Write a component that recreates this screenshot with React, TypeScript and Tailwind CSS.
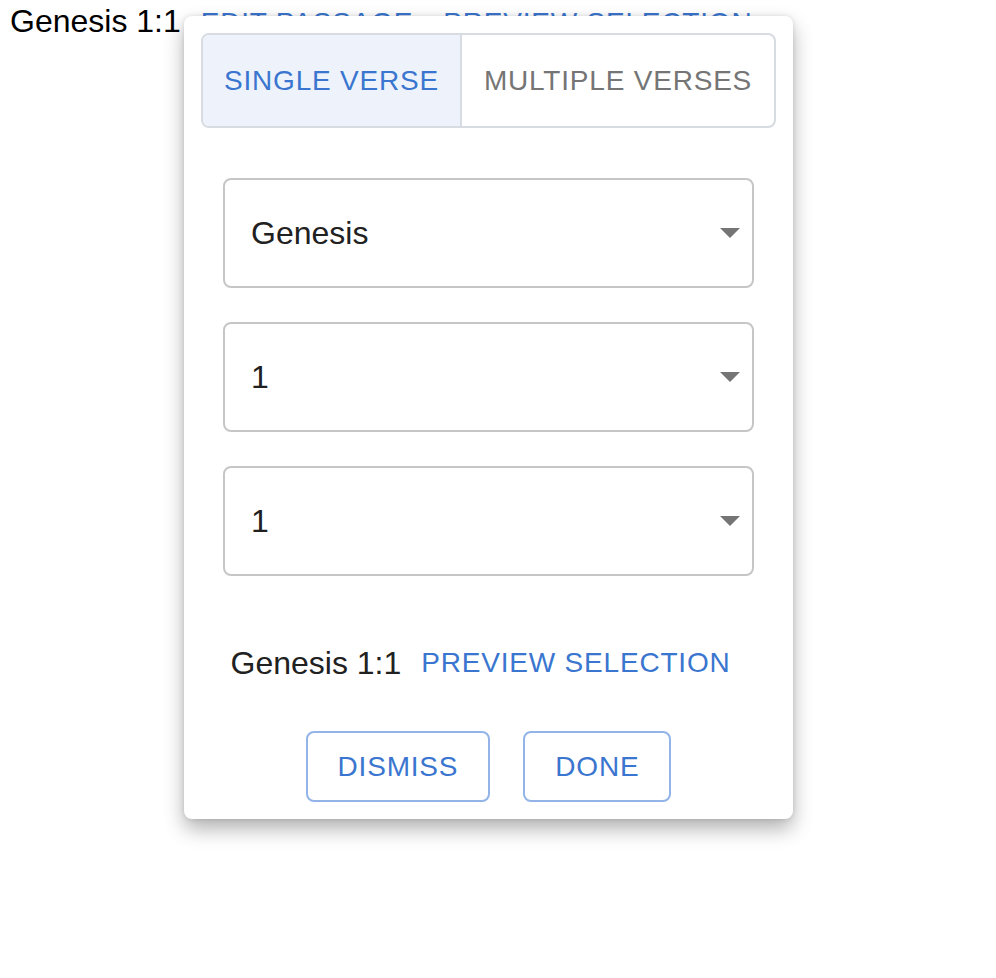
import { useState } from 'react'

const blue = 'text-[#3a76cf]'

function ArrowDown(){
  return (
    <svg width="20" height="10" viewBox="0 0 20 10" className="shrink-0">
      <path d="M0 0 L20 0 L10 10 Z" fill="#757575" />
    </svg>
  )
}

function SelectBox({ value }: { value: string }){
  return (
    <div className="h-[110px] border-2 border-[#c6c6c6] rounded-lg flex items-center justify-between pl-[26px] pr-[12px] bg-white">
      <span className="text-[32px] leading-8 text-[#212121]">{value}</span>
      <ArrowDown />
    </div>
  )
}

export default function App(){
  const [mode, setMode] = useState<'single' | 'multi'>('single')
  return (
    <div className="relative min-h-[978px] bg-white" style={{ fontFamily: '"Liberation Sans", Arial, sans-serif' }}>
      {/* page header */}
      <div className="flex items-baseline pl-[10px] pt-[5px] leading-8">
        <span className="text-[32px] text-black">Genesis 1:1</span>
        <button className={`ml-[20px] text-[28px] tracking-[0.8px] ${blue}`}>EDIT PASSAGE</button>
        <button className={`ml-[30px] text-[28px] tracking-[0.8px] ${blue}`}>PREVIEW SELECTION</button>
      </div>

      {/* popover */}
      <div className="absolute left-[184px] top-[16px] w-[609px] bg-white rounded-lg p-[17px] shadow-[0_10px_20px_rgba(0,0,0,0.3),0_0_5px_rgba(0,0,0,0.12)]">
        <div className="flex h-[95px] border-2 border-[#d7dbe2] rounded-lg overflow-hidden">
          <button
            onClick={()=>setMode('single')}
            className={`w-[259px] border-r-2 border-[#d7dbe2] text-[28px] tracking-[0.8px] ${mode === 'single' ? 'bg-[#eef3fb] text-[#3a76cf]' : 'text-[#757575]'}`}
          >SINGLE VERSE</button>
          <button
            onClick={()=>setMode('multi')}
            className={`flex-1 text-[28px] tracking-[0.8px] ${mode === 'multi' ? 'bg-[#eef3fb] text-[#3a76cf]' : 'text-[#757575]'}`}
          >MULTIPLE VERSES</button>
        </div>

        <div className="mx-[22px] mt-[50px] flex flex-col gap-[34px]">
          <SelectBox value="Genesis" />
          <SelectBox value="1" />
          <SelectBox value="1" />
        </div>

        <div className="mx-[22px] mt-[50px] h-[73px] flex items-center justify-center">
          <span className="text-[32px] text-[#212121]">Genesis 1:1</span>
          <button className={`ml-1 px-4 py-3 text-[28px] tracking-[0.8px] ${blue}`}>PREVIEW SELECTION</button>
        </div>

        <div className="mx-[22px] mt-[32px] flex justify-center gap-[33px]">
          <button className={`h-[71px] px-[30px] border-2 border-[#92b4e8] rounded-lg text-[28px] tracking-[0.8px] ${blue}`}>DISMISS</button>
          <button className={`h-[71px] px-[30px] border-2 border-[#92b4e8] rounded-lg text-[28px] tracking-[0.8px] ${blue}`}>DONE</button>
        </div>
      </div>
    </div>
  )
}
